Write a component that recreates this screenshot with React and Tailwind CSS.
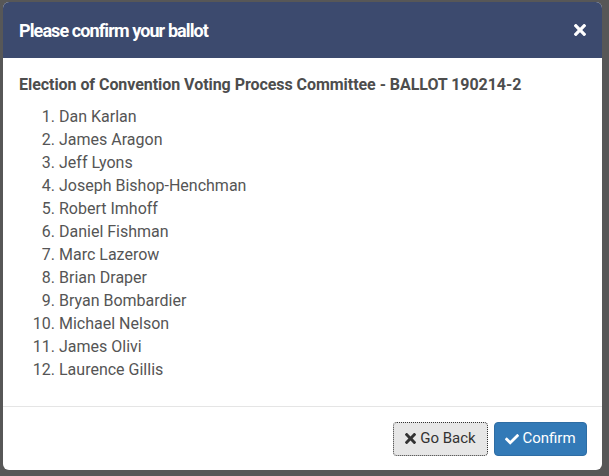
import React from 'react';

const names = [
  'Dan Karlan',
  'James Aragon',
  'Jeff Lyons',
  'Joseph Bishop-Henchman',
  'Robert Imhoff',
  'Daniel Fishman',
  'Marc Lazerow',
  'Brian Draper',
  'Bryan Bombardier',
  'Michael Nelson',
  'James Olivi',
  'Laurence Gillis',
];

// font-awesome style "times" glyph
const TimesIcon = ({ className }) => (
  <svg viewBox="0 0 352 352" className={className} fill="currentColor">
    <path d="M242.72 176l100.07-100.07c12.28-12.28 12.28-32.19 0-44.48l-22.24-22.24c-12.28-12.28-32.19-12.28-44.48 0L176 109.28 75.93 9.21c-12.28-12.28-32.19-12.28-44.48 0L9.21 31.45c-12.28 12.28-12.28 32.19 0 44.48L109.28 176 9.21 276.07c-12.28 12.28-12.28 32.19 0 44.48l22.24 22.24c12.28 12.28 32.2 12.28 44.48 0L176 242.72l100.07 100.07c12.28 12.28 32.2 12.28 44.48 0l22.24-22.24c12.28-12.28 12.28-32.19 0-44.48L242.72 176z" />
  </svg>
);

const CheckIcon = ({ className }) => (
  <svg viewBox="0 40 512 420" className={className} fill="currentColor">
    <path d="M173.898 439.404l-166.4-166.4c-9.997-9.997-9.997-26.206 0-36.204l36.203-36.204c9.997-9.998 26.207-9.998 36.204 0L192 312.69 432.095 72.596c9.997-9.997 26.207-9.997 36.204 0l36.203 36.204c9.997 9.997 9.997 26.206 0 36.204l-294.4 294.401c-9.998 9.997-26.207 9.997-36.204-.001z" />
  </svg>
);

export default function App() {
  return (
    <div className="w-[609px] h-[476px] bg-[#575757] pt-[2px] pl-[3px] font-['Roboto',sans-serif]">
      <div className="w-[599px] h-[468px] bg-white rounded-[6px] overflow-hidden flex flex-col">
        {/* header */}
        <div className="h-[56px] bg-[#3c4a6e] flex items-center justify-between pl-[16px] pr-[16px] shrink-0">
          <h4 className="text-white text-[18px] font-bold tracking-[-0.9px]">Please confirm your ballot</h4>
          <TimesIcon className="w-[12px] h-[12px] shrink-0 text-white" />
        </div>

        {/* body */}
        <div className="flex-1 px-[16px] pt-[16px] text-[#555]">
          <p className="text-[16px] font-bold leading-[22px] text-[#4d4d4d] tracking-[-0.05px]">
            Election of Convention Voting Process Committee - BALLOT 190214-2
          </p>
          <ol className="list-decimal pl-[40px] mt-[9px] text-[16px] leading-[23px]">
            {names.map((n) => (
              <li key={n}>{n}</li>
            ))}
          </ol>
        </div>

        {/* footer */}
        <div className="h-[64px] border-t border-[#e5e5e5] flex items-center justify-end gap-[6px] pr-[15px] shrink-0">
          <button className="h-[34px] w-[95px] flex items-center justify-center gap-[4px] bg-[#e6e6e6] border border-dotted border-[#333] rounded-[4px] text-[#333] text-[15px]">
            <TimesIcon className="w-[11px] h-[11px] shrink-0" />
            Go Back
          </button>
          <button className="h-[34px] w-[93px] flex items-center justify-center gap-[3px] bg-[#337ab7] border border-[#2e6da4] rounded-[4px] text-white text-[15px]">
            <CheckIcon className="w-[14px] h-[12px] shrink-0" />
            Confirm
          </button>
        </div>
      </div>
    </div>
  );
}
